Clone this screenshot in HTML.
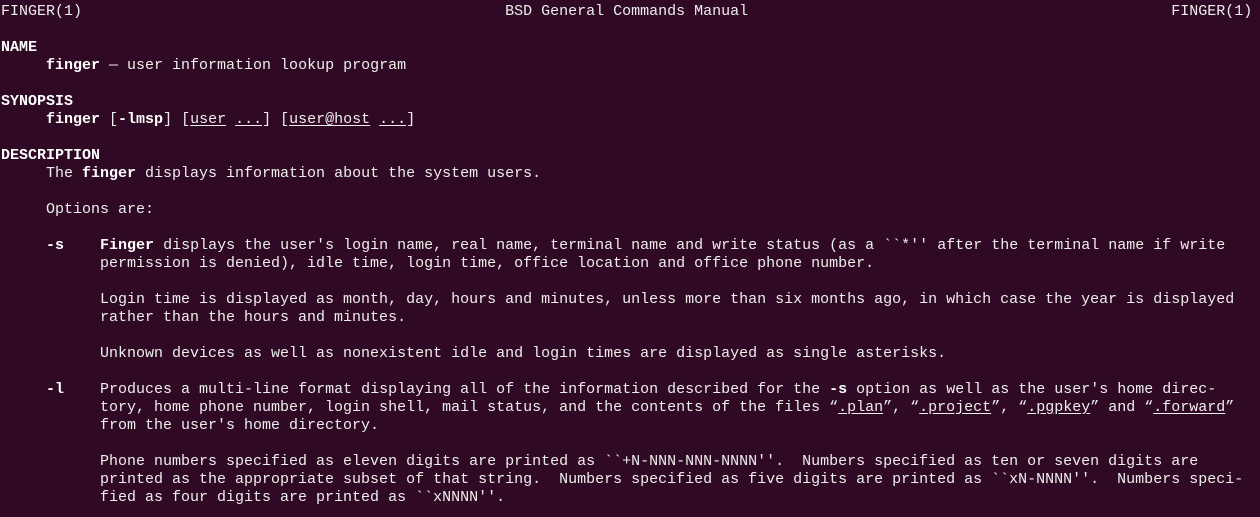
<!DOCTYPE html>
<html><head><meta charset="utf-8"><style>
html,body{margin:0;padding:0;background:#300a24;width:1260px;height:517px;overflow:hidden}
pre{margin:0;padding:3px 0 0 1px;font-family:"Liberation Mono","DejaVu Sans Mono",monospace;font-size:15px;line-height:18px;color:#eeeeec;letter-spacing:0}
b{font-weight:bold;color:#fff}
u{text-decoration:underline;text-underline-offset:2px}
</style></head><body><pre>FINGER(1)                                               BSD General Commands Manual                                               FINGER(1)

<b>NAME</b>
     <b>finger</b> — user information lookup program

<b>SYNOPSIS</b>
     <b>finger</b> [<b>-lmsp</b>] [<u>user</u> <u>...</u>] [<u>user@host</u> <u>...</u>]

<b>DESCRIPTION</b>
     The <b>finger</b> displays information about the system users.

     Options are:

     <b>-s</b>    <b>Finger</b> displays the user's login name, real name, terminal name and write status (as a ``*'' after the terminal name if write
           permission is denied), idle time, login time, office location and office phone number.

           Login time is displayed as month, day, hours and minutes, unless more than six months ago, in which case the year is displayed
           rather than the hours and minutes.

           Unknown devices as well as nonexistent idle and login times are displayed as single asterisks.

     <b>-l</b>    Produces a multi-line format displaying all of the information described for the <b>-s</b> option as well as the user's home direc‐
           tory, home phone number, login shell, mail status, and the contents of the files “<u>.plan</u>”, “<u>.project</u>”, “<u>.pgpkey</u>” and “<u>.forward</u>”
           from the user's home directory.

           Phone numbers specified as eleven digits are printed as ``+N-NNN-NNN-NNNN''.  Numbers specified as ten or seven digits are
           printed as the appropriate subset of that string.  Numbers specified as five digits are printed as ``xN-NNNN''.  Numbers speci‐
           fied as four digits are printed as ``xNNNN''.
</pre></body></html>
